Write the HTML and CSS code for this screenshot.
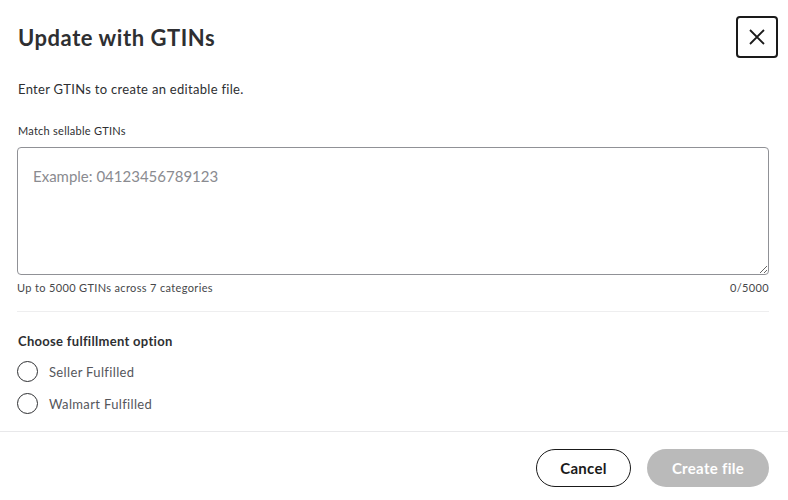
FILE: index.html
```html
<!DOCTYPE html>
<html lang="en">
<head>
<meta charset="utf-8">
<title>Update with GTINs</title>
<link rel="stylesheet" href="styles.css">
</head>
<body>
<div class="modal">
  <div class="body">
    <div class="header">
      <h1 class="title">Update with GTINs</h1>
      <button class="close" aria-label="Close">
        <svg width="16" height="16" viewBox="0 0 16 16"><path d="M1 1L15 15M15 1L1 15" stroke="#1a1a1a" stroke-width="1.8" fill="none"/></svg>
      </button>
    </div>
    <p class="intro">Enter GTINs to create an editable file.</p>
    <label class="label" for="gtins">Match sellable GTINs</label>
    <textarea id="gtins" class="input" placeholder="Example: 04123456789123"></textarea>
    <div class="helper">
      <span>Up to 5000 GTINs across 7 categories</span>
      <span>0/5000</span>
    </div>
    <hr class="divider">
    <div class="group-title">Choose fulfillment option</div>
    <label class="radio"><span class="circle"></span><span class="radio-text">Seller Fulfilled</span></label>
    <label class="radio"><span class="circle"></span><span class="radio-text">Walmart Fulfilled</span></label>
  </div>
  <div class="footer">
    <button class="btn btn-secondary">Cancel</button>
    <button class="btn btn-primary" disabled>Create file</button>
  </div>
</div>
</body>
</html>
```

FILE: styles.css
```css
* { box-sizing: border-box; }
html, body { margin: 0; padding: 0; background: #fff; }
body {
  font-family: Lato, "Open Sans", "Liberation Sans", sans-serif;
  color: #2e2f32;
  width: 788px;
  height: 500px;
  overflow: hidden;
}
.modal { display: flex; flex-direction: column; }
.body { padding: 16px 19px 0 17px; }
.header {
  display: flex;
  align-items: center;
  justify-content: space-between;
  height: 42px;
}
.title {
  margin: 0 0 0 1px;
  font-size: 22px;
  letter-spacing: 0.55px;
  font-weight: 700;
  color: #2e2f32;
}
.close {
  width: 42px;
  height: 42px;
  margin-right: -9px;
  border: 2px solid #1a1a1a;
  border-radius: 4px;
  background: #fff;
  display: flex;
  align-items: center;
  justify-content: center;
  padding: 0;
}
.intro {
  margin: 22px 0 0 1px;
  font-size: 13px;
  letter-spacing: 0.3px;
  line-height: 18px;
}
.label {
  display: block;
  margin: 26px 0 0 1px;
  font-size: 11px;
  letter-spacing: 0.25px;
  line-height: 14px;
}
.input {
  display: block;
  width: 752px;
  height: 128px;
  margin-top: 9px;
  border: 1px solid #909196;
  border-radius: 4px;
  padding: 19px 15px;
  font-family: inherit;
  font-size: 15px;
  color: #2e2f32;
  resize: vertical;
  outline: none;
}
.input::placeholder { color: #8a8b90; }
.helper {
  display: flex;
  justify-content: space-between;
  width: 752px;
  margin-top: 6px;
  font-size: 11px;
  letter-spacing: 0.35px;
  line-height: 14px;
  color: #46474a;
}
.divider {
  width: 752px;
  margin: 16px 0 0 0;
  border: 0;
  border-top: 1px solid #eeeeef;
}
.group-title {
  margin: 20px 0 0 1px;
  font-size: 13px;
  letter-spacing: 0.3px;
  line-height: 18px;
  font-weight: 700;
}
.radio {
  display: flex;
  align-items: center;
  height: 22px;
  margin-top: 10px;
}
.radio + .radio { margin-top: 10px; }
.circle {
  width: 21px;
  height: 21px;
  border: 1.5px solid #2e2f32;
  border-radius: 50%;
}
.radio-text {
  margin-left: 11px;
  font-size: 13px;
  letter-spacing: 0.35px;
  line-height: 22px;
  padding-top: 1px;
  color: #55565b;
}
.footer {
  margin-top: 17px;
  border-top: 1px solid #e8e8ea;
  padding: 17px 19px 0 0;
  display: flex;
  justify-content: flex-end;
  gap: 16px;
}
.btn {
  height: 38px;
  border-radius: 19px;
  font-family: inherit;
  font-size: 15px;
  letter-spacing: 0.3px;
  font-weight: 700;
  padding: 0;
}
.btn-secondary {
  width: 95px;
  background: #fff;
  border: 1px solid #1a1a1a;
  color: #1a1a1a;
}
.btn-primary {
  width: 122px;
  background: #bababa;
  border: 0;
  color: #fff;
}
```
